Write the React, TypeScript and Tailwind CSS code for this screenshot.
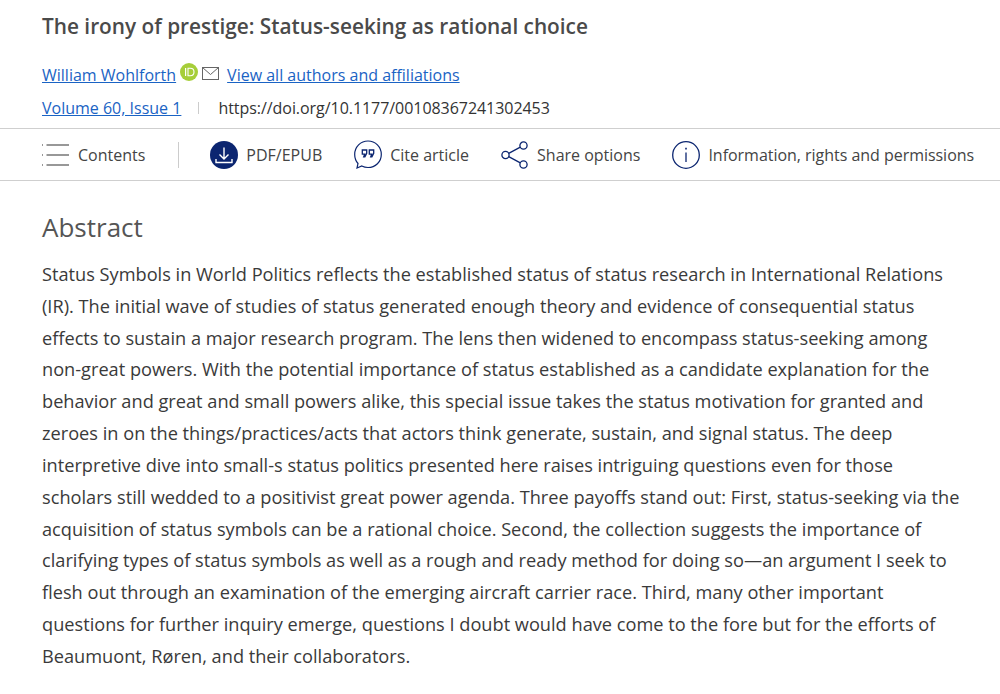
import React from "react";

const lines = [
	"Status Symbols in World Politics reflects the established status of status research in International Relations",
	"(IR). The initial wave of studies of status generated enough theory and evidence of consequential status",
	"effects to sustain a major research program. The lens then widened to encompass status-seeking among",
	"non-great powers. With the potential importance of status established as a candidate explanation for the",
	"behavior and great and small powers alike, this special issue takes the status motivation for granted and",
	"zeroes in on the things/practices/acts that actors think generate, sustain, and signal status. The deep",
	"interpretive dive into small-s status politics presented here raises intriguing questions even for those",
	"scholars still wedded to a positivist great power agenda. Three payoffs stand out: First, status-seeking via the",
	"acquisition of status symbols can be a rational choice. Second, the collection suggests the importance of",
	"clarifying types of status symbols as well as a rough and ready method for doing so—an argument I seek to",
	"flesh out through an examination of the emerging aircraft carrier race. Third, many other important",
	"questions for further inquiry emerge, questions I doubt would have come to the fore but for the efforts of",
	"Beaumuont, Røren, and their collaborators.",
];

function ContentsIcon() {
	return (
		<svg width="28" height="22" viewBox="0 0 28 22" fill="none" stroke="#333" strokeWidth="1.200">
			<path d="M4.500 1H27M4.500 11H27M4.500 21H27" />
			<path d="M0 1h1M0 11h1M0 21h1" />
		</svg>
	);
}

function PdfIcon() {
	return (
		<svg width="28" height="28" viewBox="0 0 28 28" fill="none">
			<circle cx="14" cy="14" r="14" fill="#0b2570" />
			<path d="M14 6.500v11.500M9.500 13.500l4.500 4.500 4.500-4.500M6 18v3.500h16V18" stroke="#fff" strokeWidth="1.400" />
		</svg>
	);
}

function CiteIcon() {
	return (
		<svg width="28" height="29" viewBox="0 0 28 29" fill="none">
			<path d="M4 23.500C1.800 21 .7 18 .7 14.400.7 7 6.600 1 14 1s13.300 6 13.300 13.400S21.400 27.500 14 27.500c-2.200 0-4.300-.5-6.200-1.500L3 28l1-4.500z" stroke="#0b2570" strokeWidth="1.200" />
			<path d="M8.300 10h4.400v3.400l-1.800 3.400H9.700l1-2.600H8.300zM15.300 10h4.400v3.400l-1.800 3.400h-1.200l1-2.600h-2.400z" fill="none" stroke="#0b2570" strokeWidth="1.300" />
		</svg>
	);
}

function ShareIcon() {
	return (
		<svg width="28" height="28" viewBox="0 0 28 28" fill="none" stroke="#0b2570" strokeWidth="1.300">
			<circle cx="4.500" cy="14" r="3.600" />
			<circle cx="22.500" cy="4.500" r="3.600" />
			<circle cx="22.500" cy="23.500" r="3.600" />
			<path d="M7.700 12.300l11.600-6.100M7.700 15.700l11.600 6.100" />
		</svg>
	);
}

function InfoIcon() {
	return (
		<svg width="28" height="28" viewBox="0 0 28 28" fill="none" stroke="#0b2570" strokeWidth="1.300">
			<circle cx="14" cy="14" r="13.300" />
			<path d="M14 11.500v9.500" />
			<path d="M14 6.800v1.800" strokeWidth="1.600" />
		</svg>
	);
}

function OrcidIcon() {
	return (
		<svg width="18" height="18" viewBox="0 0 18 18">
			<circle cx="9" cy="9" r="9" fill="#a6ce39" />
			<path d="M5.600 5v8" stroke="#fff" strokeWidth="1.200" />
			<path d="M8 5.300h2.300c2.300 0 3.700 1.500 3.700 3.700s-1.400 3.700-3.700 3.700H8z" fill="none" stroke="#fff" strokeWidth="1.100" />
		</svg>
	);
}

function MailIcon() {
	return (
		<svg width="17" height="13" viewBox="0 0 17 13" fill="none" stroke="#666" strokeWidth="1">
			<rect x=".5" y=".5" width="16" height="12" />
			<path d="M.5.500l8 7 8-7" />
		</svg>
	);
}

export default function App() {
	return (
		<div className="w-[1000px] h-[694px] overflow-hidden bg-white font-['Open_Sans',sans-serif] text-[#333]">
			<div className="pl-[42px] pt-[12px]">
				<div className="text-[20.800px] leading-[29px] font-semibold text-[#4a4a4a] whitespace-nowrap">
					The irony of prestige: Status-seeking as rational choice
				</div>
				<div className="flex items-center h-[24px] mt-[22px] text-[16px] text-[#1a63c4] whitespace-nowrap">
					<a className="underline">William Wohlforth</a>
					<span className="ml-[4px] -mt-[6px]"><OrcidIcon /></span>
					<span className="ml-[4px] -mt-[4px]"><MailIcon /></span>
					<a className="underline ml-[8px]">View all authors and affiliations</a>
				</div>
				<div className="flex items-center h-[24px] mt-[9px] text-[16px] whitespace-nowrap">
					<a className="underline text-[#1a63c4]">Volume 60, Issue 1</a>
					<span className="w-px h-[12px] bg-[#ccc] ml-[17px]" />
					<span className="ml-[19px] tracking-[-0.050px] text-[#333]">https://doi.org/10.1177/00108367241302453</span>
				</div>
			</div>
			<div className="mt-[8px] h-[53px] border-y border-[#cfcfcf] flex items-center pl-[42px] text-[16px] text-[#444] whitespace-nowrap">
				<ContentsIcon />
				<span className="ml-[8px]">Contents</span>
				<span className="w-px h-[26px] bg-[#ccc] ml-[33px]" />
				<span className="ml-[31px] shrink-0"><PdfIcon /></span>
				<span className="ml-[8px]">PDF/EPUB</span>
				<span className="ml-[32px] shrink-0"><CiteIcon /></span>
				<span className="ml-[8px]">Cite article</span>
				<span className="ml-[32px] shrink-0"><ShareIcon /></span>
				<span className="ml-[8px]">Share options</span>
				<span className="ml-[32px] shrink-0"><InfoIcon /></span>
				<span className="ml-[8px] tracking-[-0.030px]">Information, rights and permissions</span>
			</div>
			<div className="pl-[42px] pt-[28px]">
				<div className="text-[26px] leading-[36px] text-[#555]">Abstract</div>
				<div className="mt-[14px] text-[18.200px] leading-[31.830px] text-[#3a3a3a]">
					{lines.map((l) => (
						<div key={l} className="whitespace-nowrap">{l}</div>
					))}
				</div>
			</div>
		</div>
	);
}
